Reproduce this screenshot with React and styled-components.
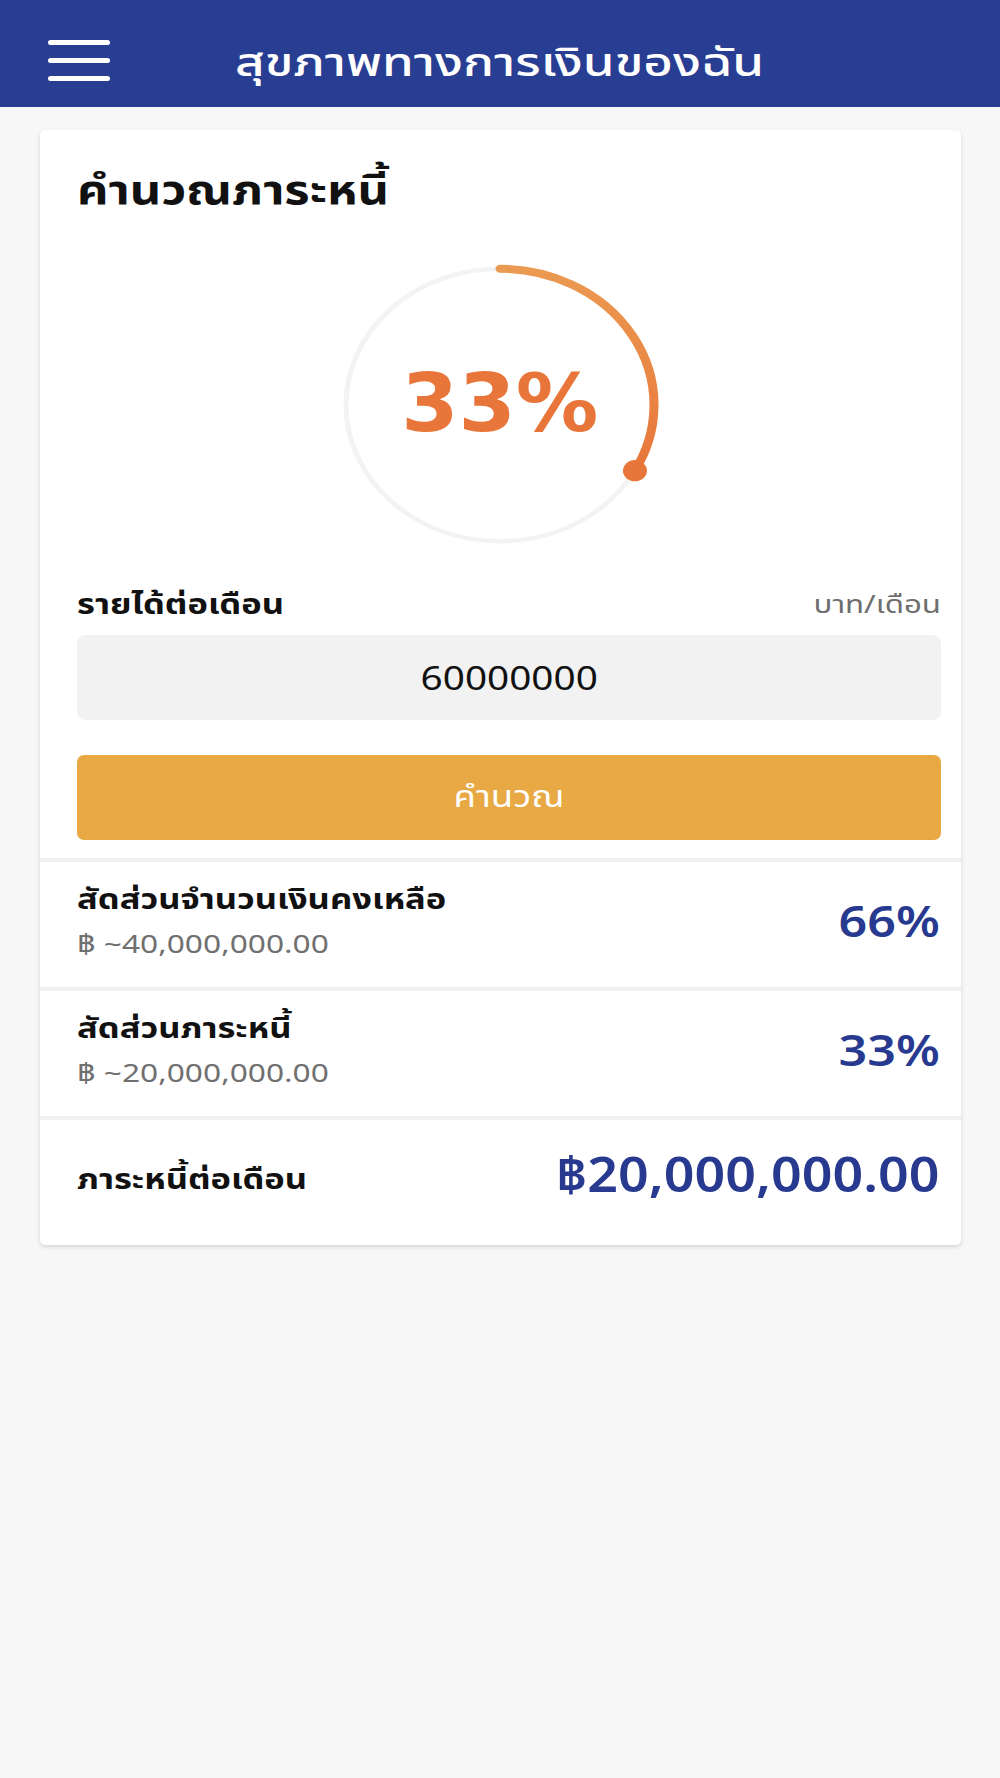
import styled, { createGlobalStyle, css } from "styled-components";

const GlobalStyle = createGlobalStyle`
  html, body {
    margin: 0;
    padding: 0;
    background: #f7f7f7;
  }
  body {
    font-family: "Noto Sans", "Noto Sans Thai", "Loma", "Garuda", sans-serif;
    color: #111;
  }
`;

// the screenshot is a little wider than tall, so the text is stretched to match
const stretch = (amount, origin = "left") => css`
  display: inline-block;
  transform: scaleX(${amount});
  transform-origin: ${origin} center;
`;

const Page = styled.div`
  min-height: 1778px;
  background: #f7f7f7;
`;

const Header = styled.header`
  height: 107px;
  box-sizing: border-box;
  padding: 14px 0 0 48px;
  background: #283e92;
  display: flex;
  align-items: center;
  gap: 125px;
`;

const Burger = styled.button`
  width: 62px;
  height: 41px;
  padding: 0;
  border: 0;
  background: transparent;
  display: flex;
  flex-direction: column;
  justify-content: space-between;
  span {
    display: block;
    height: 5px;
    border-radius: 3px;
    background: #fff;
  }
`;

const HeaderTitle = styled.h1`
  margin: 0;
  color: #fff;
  font-size: 40px;
  font-weight: 500;
  line-height: 1;
  ${stretch(1.28)}
`;

const Card = styled.section`
  margin: 23px 39px 0 40px;
  background: #fff;
  border-radius: 5px;
  box-shadow: 0 2px 4px rgba(0, 0, 0, 0.14);
  overflow: hidden;
`;

const Top = styled.div`
  padding: 33px 20px 18px 37px;
`;

const CardTitle = styled.h2`
  margin: 0;
  font-size: 41px;
  font-weight: 700;
  line-height: 50px;
  ${stretch(1.19)}
`;

const Gauge = styled.div`
  position: relative;
  width: 330px;
  height: 292px;
  margin: 46px 0 34px calc(50% - 174px);
  svg {
    display: block;
  }
`;

const GaugeValue = styled.div`
  position: absolute;
  inset: 0;
  display: flex;
  align-items: center;
  justify-content: center;
  color: #e8763a;
  font-family: "DejaVu Sans", sans-serif;
  font-size: 80px;
  font-weight: 700;
  padding-bottom: 4px;
  span {
    ${stretch(1.03, "center")}
  }
`;

const FieldHead = styled.div`
  display: flex;
  justify-content: space-between;
  align-items: center;
  line-height: 36px;
`;

const FieldLabel = styled.span`
  font-size: 29px;
  font-weight: 700;
  ${stretch(1.19)}
`;

const FieldUnit = styled.span`
  font-size: 25px;
  color: #6e6e6e;
  ${stretch(1.25, "right")}
`;

const Input = styled.div`
  margin-top: 14px;
  height: 85px;
  border-radius: 8px;
  background: #f2f2f2;
  display: flex;
  align-items: center;
  justify-content: center;
  font-size: 32px;
  span {
    ${stretch(1.21, "center")}
  }
`;

const Button = styled.button`
  margin-top: 35px;
  width: 100%;
  height: 85px;
  border: 0;
  border-radius: 7px;
  background: #e8a843;
  color: #fff;
  font-family: inherit;
  font-size: 31px;
  span {
    ${stretch(1.18, "center")}
  }
`;

const Row = styled.div`
  border-top: 4px solid #f0f0f0;
  height: 129px;
  box-sizing: border-box;
  padding: 0 21px 10px 37px;
  display: flex;
  align-items: center;
  justify-content: space-between;
`;

const RowText = styled.div`
  display: flex;
  flex-direction: column;
  align-items: flex-start;
  gap: 10px;
`;

const RowTitle = styled.span`
  font-size: 29px;
  font-weight: 700;
  line-height: 36px;
  ${stretch(1.19)}
`;

const RowSub = styled.span`
  font-size: 26px;
  color: #707070;
  line-height: 34px;
  ${stretch(1.22)}
`;

const RowValue = styled.span`
  color: #283a8f;
  font-size: ${({ big }) => (big ? "48px" : "44px")};
  font-weight: 600;
  ${({ big }) => stretch(big ? 1.12 : 1.14, "right")}
`;

function ProgressRing({ percent }) {
  const r = 154;
  const c = 165;
  const angle = (percent / 100) * 2 * Math.PI;
  const ex = c + r * Math.sin(angle);
  const ey = c - r * Math.cos(angle);
  return (
    <svg width="330" height="292" viewBox="0 0 330 330" preserveAspectRatio="none">
      <defs>
        <linearGradient id="arc" x1="0" y1="0" x2="0" y2="1">
          <stop offset="0" stopColor="#eb9a52" />
          <stop offset="1" stopColor="#e8763a" />
        </linearGradient>
      </defs>
      <circle cx={c} cy={c} r={r} fill="none" stroke="#f3f3f3" strokeWidth="5" />
      <path
        d={`M ${c} ${c - r} A ${r} ${r} 0 0 1 ${ex} ${ey}`}
        fill="none"
        stroke="url(#arc)"
        strokeWidth="9"
        strokeLinecap="round"
      />
      <circle cx={ex} cy={ey} r="12" fill="#e8763a" />
    </svg>
  );
}

const rows = [
  { title: "สัดส่วนจำนวนเงินคงเหลือ", sub: "฿ ~40,000,000.00", value: "66%" },
  { title: "สัดส่วนภาระหนี้", sub: "฿ ~20,000,000.00", value: "33%" },
];

export default function App() {
  return (
    <Page>
      <GlobalStyle />
      <Header>
        <Burger aria-label="menu">
          <span />
          <span />
          <span />
        </Burger>
        <HeaderTitle>สุขภาพทางการเงินของฉัน</HeaderTitle>
      </Header>
      <Card>
        <Top>
          <CardTitle>คำนวณภาระหนี้</CardTitle>
          <Gauge>
            <ProgressRing percent={33} />
            <GaugeValue>
              <span>33%</span>
            </GaugeValue>
          </Gauge>
          <FieldHead>
            <FieldLabel>รายได้ต่อเดือน</FieldLabel>
            <FieldUnit>บาท/เดือน</FieldUnit>
          </FieldHead>
          <Input>
            <span>60000000</span>
          </Input>
          <Button>
            <span>คำนวณ</span>
          </Button>
        </Top>
        {rows.map((row) => (
          <Row key={row.title}>
            <RowText>
              <RowTitle>{row.title}</RowTitle>
              <RowSub>{row.sub}</RowSub>
            </RowText>
            <RowValue>{row.value}</RowValue>
          </Row>
        ))}
        <Row>
          <RowTitle>ภาระหนี้ต่อเดือน</RowTitle>
          <RowValue big>฿20,000,000.00</RowValue>
        </Row>
      </Card>
    </Page>
  );
}
